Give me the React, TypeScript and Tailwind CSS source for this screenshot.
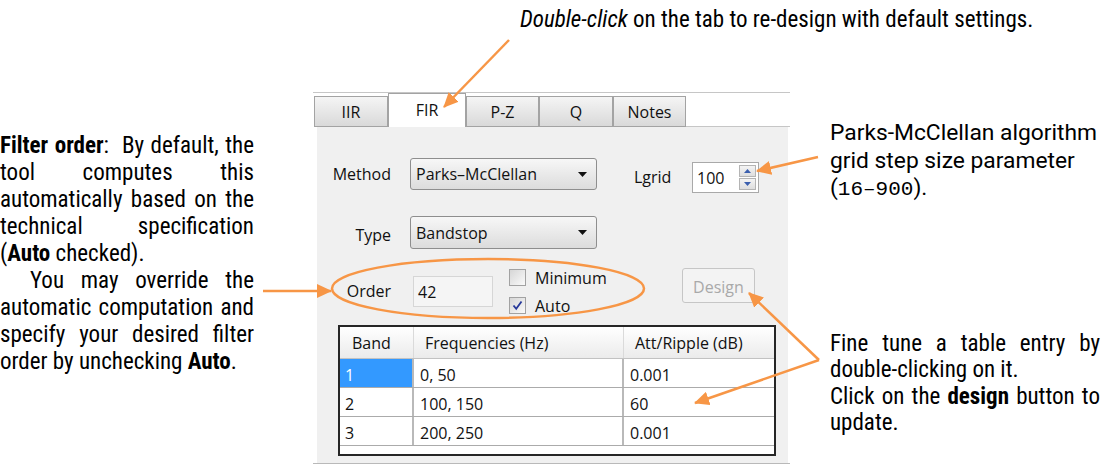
import * as React from "react";

const ORANGE = "#f79646";

function NoteLine({ children, last }: { children: React.ReactNode; last?: boolean }) {
  return (
    <div className={last ? "text-left" : "text-justify [text-align-last:justify]"}>
      {children}
    </div>
  );
}

function LeftNote() {
  return (
    <div className="w-[254px] shrink-0 pt-[40px] font-['Roboto',sans-serif] text-[23px] leading-[27px] [font-stretch:condensed]">
      <NoteLine>
        <b>Filter order</b>:&nbsp; By default, the
      </NoteLine>
      <NoteLine>tool computes this</NoteLine>
      <NoteLine>automatically based on the</NoteLine>
      <NoteLine>technical specification</NoteLine>
      <NoteLine last>
        (<b>Auto</b> checked).
      </NoteLine>
      <div className="pl-[30px] text-justify [text-align-last:justify]">You may override the</div>
      <NoteLine>automatic computation and</NoteLine>
      <NoteLine>specify your desired filter</NoteLine>
      <NoteLine last>
        order by unchecking <b>Auto</b>.
      </NoteLine>
    </div>
  );
}

function RightNotes() {
  return (
    <div className="ml-[40px] w-[270px] shrink-0 font-['Roboto',sans-serif]">
      <div className="pt-[27px] text-[22.8px] leading-[27.5px]">
        <div>Parks-McClellan algorithm</div>
        <div>grid step size parameter</div>
        <div>
          (<span className="font-['Liberation_Mono',monospace] text-[21px]">16–900</span>).
        </div>
      </div>
      <div className="mt-[127px] text-[23px] leading-[26.5px] [font-stretch:condensed]">
        <NoteLine>Fine tune a table entry by</NoteLine>
        <NoteLine last>double-clicking on it.</NoteLine>
        <NoteLine>
          Click on the <b>design</b> button to
        </NoteLine>
        <NoteLine last>update.</NoteLine>
      </div>
    </div>
  );
}

function Tab({ label, active, w }: { label: string; active?: boolean; w: string }) {
  if (active) {
    return (
      <div className={`${w} flex h-[34px] items-center justify-center border-x border-t border-[#a3a3a3] bg-white pb-[2px]`}>
        {label}
      </div>
    );
  }
  return (
    <div
      className={`${w} flex h-[31px] items-center justify-center border border-[#a3a3a3] bg-gradient-to-b from-[#f5f5f5] to-[#d9d9d9]`}
    >
      {label}
    </div>
  );
}

function Select({ value, h }: { value: string; h: string }) {
  return (
    <div
      className={`ml-[19px] flex w-[187px] ${h} items-center justify-between rounded-[3px] border border-[#8e8e8e] bg-gradient-to-b from-[#f7f7f7] to-[#dcdcdc] pl-[5px] pr-[9px]`}
    >
      <span>{value}</span>
      <svg width="9" height="5" viewBox="0 0 9 5">
        <path d="M0 0 H9 L4.5 5 Z" fill="#111" />
      </svg>
    </div>
  );
}

function Checkbox({ label, checked }: { label: string; checked?: boolean }) {
  return (
    <div className="flex h-[17px] items-center">
      <div className="flex h-[17px] w-[17px] items-center justify-center border border-[#a2a2a2] bg-gradient-to-br from-[#d6d6d6] to-[#fafafa]">
        {checked && (
          <svg width="13" height="13" viewBox="0 0 13 13">
            <path d="M2.5 6.5 L5.2 9.8 L10.5 2.5" fill="none" stroke="#27399a" strokeWidth="1.8" />
          </svg>
        )}
      </div>
      <span className="ml-[9px]">{label}</span>
    </div>
  );
}

function Spinner() {
  return (
    <div className="ml-[16px] mt-[4px] flex h-[31px] w-[67px] items-center justify-between border border-[#a9a9a9] bg-white pl-[4px] pr-[2px]">
      <span>100</span>
      <div className="flex flex-col gap-[1px]">
        {[0, 1].map((i) => (
          <div
            key={i}
            className="flex h-[12px] w-[17px] items-center justify-center border border-[#b4b4b4] bg-gradient-to-b from-[#f4f4f4] to-[#dedede]"
          >
            <svg width="7" height="4" viewBox="0 0 7 4">
              <path d={i === 0 ? "M0 4 L3.5 0 L7 4 Z" : "M0 0 H7 L3.5 4 Z"} fill="#3b5fae" />
            </svg>
          </div>
        ))}
      </div>
    </div>
  );
}

const rows = [
  ["1", "0, 50", "0.001"],
  ["2", "100, 150", "60"],
  ["3", "200, 250", "0.001"],
];

function BandTable() {
  return (
    <div className="ml-[21px] mt-[8px] h-[131px] w-[438px] border-2 border-[#262626] bg-white">
      <div className="flex h-[32px] border-b border-[#c2c2c2] bg-gradient-to-b from-white to-[#ebebeb]">
        <div className="flex w-[74px] items-center border-r border-[#dadada] pl-[12px]">Band</div>
        <div className="flex w-[210px] items-center border-r border-[#dadada] pl-[11px]">Frequencies (Hz)</div>
        <div className="flex w-[150px] items-center pl-[11px]">Att/Ripple (dB)</div>
      </div>
      {rows.map((r, i) => (
        <div key={i} className="flex h-[29px] border-b border-[#ababab]">
          <div
            className={`flex w-[74px] items-center border-r-2 border-[#b9b9b9] pl-[5px] pt-[3px] ${
              i === 0 ? "bg-[#3399ff] text-white" : ""
            }`}
          >
            {r[0]}
          </div>
          <div className="flex w-[210px] items-center border-r-2 border-[#b9b9b9] pl-[6px] pt-[3px]">{r[1]}</div>
          <div className="flex w-[150px] items-center pl-[6px] pt-[3px]">{r[2]}</div>
        </div>
      ))}
    </div>
  );
}

function Panel() {
  return (
    <div className="ml-[59px] w-[477px] shrink-0 border-t border-[#c6c6c6] font-['Open_Sans',sans-serif] text-[16px] text-[#111]">
      <div className="flex h-[34px] items-end pl-[1px]">
        <Tab label="IIR" w="w-[74px]" />
        <Tab label="FIR" w="w-[78px]" active />
        <Tab label="P-Z" w="w-[73px]" />
        <Tab label="Q" w="w-[74px]" />
        <Tab label="Notes" w="w-[73px]" />
        <div className="h-[1px] flex-1 bg-[#c6c6c6]" />
      </div>
      <div className="ml-[4px] h-[336px] w-[471px] bg-[#f0f0f0] pt-[31px]">
        <div className="flex h-[32px] items-start">
          <div className="w-[74px] text-right leading-[32px]">Method</div>
          <Select value="Parks–McClellan" h="h-[32px]" />
          <div className="ml-[37px] w-[42px] leading-[38px]">Lgrid</div>
          <Spinner />
        </div>
        <div className="mt-[26px] flex h-[33px] items-start">
          <div className="w-[74px] text-right leading-[38px]">Type</div>
          <Select value="Bandstop" h="h-[33px]" />
        </div>
        <div className="mt-[18px] flex h-[50px] items-start">
          <div className="mt-[9px] w-[74px] text-right leading-[31px]">Order</div>
          <div className="ml-[22px] mt-[9px] flex h-[31px] w-[80px] items-center border border-[#d6d6d6] bg-[#f5f5f5] pl-[4px]">
            42
          </div>
          <div className="ml-[16px] mt-[2px] flex w-[160px] flex-col gap-[11px]">
            <Checkbox label="Minimum" />
            <Checkbox label="Auto" checked />
          </div>
          <div className="ml-[13px] mt-[1px] flex h-[35px] w-[73px] items-center justify-center rounded-[3px] border border-[#c6c6c6] bg-[#f3f3f3] pt-[2px] text-[#a9a9a9]">
            Design
          </div>
        </div>
        <BandTable />
      </div>
      <div className="h-[1px] bg-[#b9b9b9]" />
    </div>
  );
}

function Overlay() {
  return (
    <svg className="pointer-events-none absolute left-0 top-0" width="1102" height="470" viewBox="0 0 1102 470">
      <defs>
        <marker id="ah" markerUnits="userSpaceOnUse" markerWidth="16" markerHeight="14" refX="14" refY="7" orient="auto">
          <path d="M0 0 L15 7 L0 14 Z" fill={ORANGE} />
        </marker>
      </defs>
      <g stroke={ORANGE} strokeWidth="2.5" fill="none">
        <line x1="509" y1="40" x2="444" y2="107" markerEnd="url(#ah)" />
        <line x1="818" y1="157" x2="757" y2="171" markerEnd="url(#ah)" />
        <line x1="263" y1="291" x2="331" y2="291" markerEnd="url(#ah)" />
        <line x1="819" y1="360" x2="749" y2="293" markerEnd="url(#ah)" />
        <line x1="819" y1="360" x2="695" y2="403" markerEnd="url(#ah)" />
        <ellipse cx="488" cy="288.5" rx="156" ry="29.5" />
      </g>
    </svg>
  );
}

export default function App() {
  return (
    <div className="relative h-[470px] w-[1102px] overflow-hidden bg-white text-black">
      <div className="h-[92px] pl-[520px] pt-[6px] font-['Roboto',sans-serif] text-[23px] leading-[28px] [font-stretch:condensed]">
        <i>Double-click</i> on the tab to re-design with default settings.
      </div>
      <div className="flex items-start">
        <LeftNote />
        <Panel />
        <RightNotes />
      </div>
      <Overlay />
    </div>
  );
}
